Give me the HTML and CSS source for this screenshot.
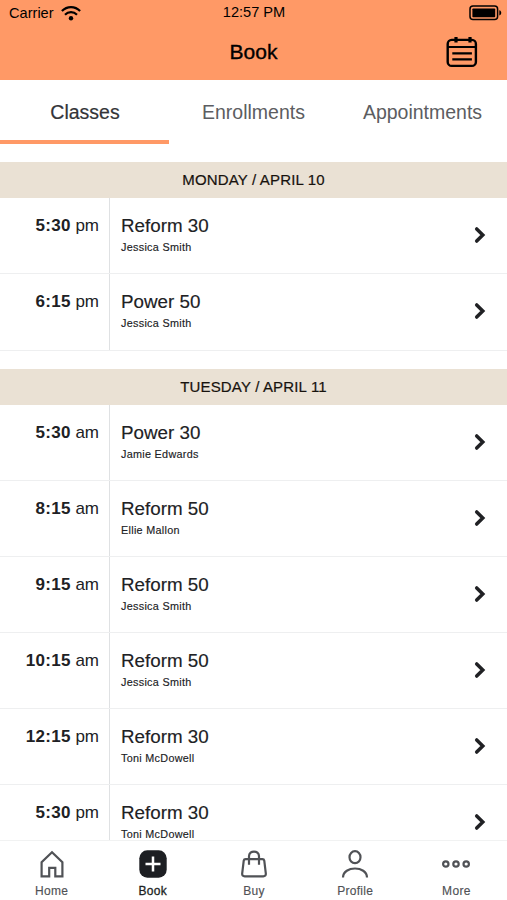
FILE: index.html
```html
<!DOCTYPE html>
<html lang="en">
<head>
<meta charset="utf-8">
<title>Book</title>
<link rel="stylesheet" href="styles.css">
</head>
<body>
<svg class="defs" aria-hidden="true">
  <symbol id="chevron" viewBox="0 0 12 18"><path d="M2.7 2.9 8.8 9 2.7 15.1" fill="none" stroke="currentColor" stroke-width="3.5" stroke-linecap="round"/></symbol>
</svg>
<div class="app">
  <header class="header">
    <div class="status">
      <div class="carrier"><span>Carrier</span>
        <svg class="wifi" width="20" height="15" viewBox="0 0 20 15"><g fill="none" stroke="#000" stroke-width="2.2"><path d="M.9 5.1C6-.2 14-.2 19.1 5.1"/><path d="M4 8.7C7.4 5.3 12.6 5.3 16 8.7"/></g><circle cx="10" cy="12.2" r="2.2"/></svg>
      </div>
      <div class="clock">12:57 PM</div>
      <svg class="battery" width="33" height="16" viewBox="0 0 33 16"><rect x="1" y="1" width="27.6" height="13.6" rx="3" fill="none" stroke="#000" stroke-width="1.5"/><rect x="3.4" y="3.4" width="22.8" height="8.8" rx=".8"/><path d="M30.3 5.2c2.6.6 2.6 4.6 0 5.2z"/></svg>
    </div>
    <div class="titlebar">
      <h1 class="title">Book</h1>
      <svg class="calendar" width="32" height="32" viewBox="0 0 32 32" fill="none" stroke="#000" stroke-width="2.4"><rect x="1.7" y="3.9" width="28.2" height="26" rx="4"/><path d="M2 11h28" stroke-width="2"/><path d="M10 1v5.4M24 1v5.4" stroke-width="3.2"/><path d="M6.3 17.3h19.6M6.3 23.4h19.6" stroke-width="2.2"/></svg>
    </div>
  </header>
  <nav class="tabs">
    <div class="tab active">Classes</div>
    <div class="tab">Enrollments</div>
    <div class="tab">Appointments</div>
  </nav>
  <main class="schedule">
    <section class="day">
      <h2 class="date">MONDAY / APRIL 10</h2>
      <div class="row"><div class="time"><b>5:30</b> pm</div><div class="info"><div class="name">Reform 30</div><div class="coach">Jessica Smith</div></div><svg class="chevron"><use href="#chevron"/></svg></div>
      <div class="row"><div class="time"><b>6:15</b> pm</div><div class="info"><div class="name">Power 50</div><div class="coach">Jessica Smith</div></div><svg class="chevron"><use href="#chevron"/></svg></div>
    </section>
    <section class="day">
      <h2 class="date">TUESDAY / APRIL 11</h2>
      <div class="row"><div class="time"><b>5:30</b> am</div><div class="info"><div class="name">Power 30</div><div class="coach">Jamie Edwards</div></div><svg class="chevron"><use href="#chevron"/></svg></div>
      <div class="row"><div class="time"><b>8:15</b> am</div><div class="info"><div class="name">Reform 50</div><div class="coach">Ellie Mallon</div></div><svg class="chevron"><use href="#chevron"/></svg></div>
      <div class="row"><div class="time"><b>9:15</b> am</div><div class="info"><div class="name">Reform 50</div><div class="coach">Jessica Smith</div></div><svg class="chevron"><use href="#chevron"/></svg></div>
      <div class="row"><div class="time"><b>10:15</b> am</div><div class="info"><div class="name">Reform 50</div><div class="coach">Jessica Smith</div></div><svg class="chevron"><use href="#chevron"/></svg></div>
      <div class="row"><div class="time"><b>12:15</b> pm</div><div class="info"><div class="name">Reform 30</div><div class="coach">Toni McDowell</div></div><svg class="chevron"><use href="#chevron"/></svg></div>
      <div class="row"><div class="time"><b>5:30</b> pm</div><div class="info"><div class="name">Reform 30</div><div class="coach">Toni McDowell</div></div><svg class="chevron"><use href="#chevron"/></svg></div>
    </section>
  </main>
  <footer class="nav">
    <div class="item"><svg class="icon" viewBox="0 0 30 30"><path d="M4.6 27.3V13.2L15 3.2 25.4 13.2V27.3H18.3V18.8H12.2V27.3Z"/></svg>Home</div>
    <div class="item current"><svg class="icon" viewBox="0 0 30 30"><rect x="1.3" y="1.3" width="27.4" height="27.4" rx="8" fill="#1d1f23" stroke="none"/><path d="M15 7.5v15M7.5 15h15" stroke="#fff" stroke-width="2.5"/></svg>Book</div>
    <div class="item"><svg class="icon" viewBox="0 0 30 30"><path d="M6.6 10.2H23.4Q25 10.2 25.3 11.8L26.8 24.4Q27.1 27.3 24.3 27.3H5.7Q2.9 27.3 3.2 24.4L4.7 11.8Q5 10.2 6.6 10.2ZM10 15.8V7.2C10 1 20 1 20 7.2V15.8"/></svg>Buy</div>
    <div class="item"><svg class="icon" viewBox="0 0 30 30"><ellipse cx="15" cy="8.2" rx="5.5" ry="6"/><path d="M3 28.5C3.2 16.5 26.8 16.5 27 28.5"/></svg>Profile</div>
    <div class="item"><svg class="icon" viewBox="0 0 30 30"><circle cx="4.8" cy="15" r="2.7"/><circle cx="15" cy="15" r="2.7"/><circle cx="25.2" cy="15" r="2.7"/></svg>More</div>
  </footer>
</div>
</body>
</html>
```
FILE: styles.css
```css
* { box-sizing: border-box; }
body { margin: 0; background: #fff; color: #202124; font-family: "Liberation Sans", Arial, sans-serif; }
.defs { display: none; }
.app { display: flex; flex-direction: column; width: 507px; height: 900px; overflow: hidden; }
.header { flex: none; height: 80px; background: #ff9966; color: #000; }
.status { display: grid; grid-template-columns: 1fr auto 1fr; height: 24px; padding: 0 5px 0 9px; font-size: 14.6px; line-height: 24px; }
.carrier { display: flex; align-items: center; gap: 7px; }
.carrier span { padding-top: 1px; }
.wifi { margin-top: 1px; }
.clock { padding-right: 3px; }
.battery { justify-self: end; margin-top: 5px; }
.titlebar { display: grid; grid-template-columns: 1fr auto 1fr; align-items: center; height: 56px; padding: 0 29px; }
.title { grid-column: 2; margin: 0; font-size: 21px; font-weight: 400; line-height: 56px; -webkit-text-stroke: .35px #000; }
.calendar { justify-self: end; }
.tabs { flex: none; display: grid; grid-template-columns: repeat(3, 1fr); height: 64px; color: #5c5d61; font-size: 19.5px; line-height: 64px; text-align: center; }
.tab { height: 64px; }
.active { padding-left: 1px; border-bottom: 4px solid #ff9966; color: #333438; -webkit-text-stroke: .2px #333438; }
.schedule { flex: 1; min-height: 0; overflow: hidden; padding-top: 18.4px; }
.day { margin-bottom: 18px; }
.date { height: 35.8px; margin: 0; background: #eae1d4; color: #17120d; font-size: 15px; font-weight: 400; line-height: 36px; text-align: center; letter-spacing: .16px; -webkit-text-stroke: .2px #17120d; }
.row { display: grid; grid-template-columns: 110px 1fr 33px; height: 76.2px; border-bottom: 1px solid #eeeff0; }
.day + .day .row { height: 76.1px; }
.day + .day { margin-top: 18.6px; }
.day + .day .date { line-height: 35px; }
.time { border-right: 1px solid #dfe1e3; padding: 18px 10px 0 0; font-size: 17px; line-height: 20px; text-align: right; }
.time b { letter-spacing: .3px; }
.info { padding: 17px 0 0 11px; }
.name { font-size: 18.8px; line-height: 22px; -webkit-text-stroke: .15px #202124; }
.coach { margin-top: 4px; font-size: 10.8px; line-height: 13px; letter-spacing: .3px; -webkit-text-stroke: .15px #202124; }
.chevron { width: 12px; height: 18px; margin-top: 28px; }
.nav { flex: none; display: grid; grid-template-columns: repeat(5, 1fr); height: 60px; padding-left: 1px; border-top: 1px solid #f1f2f2; background: #fff; color: #505256; }
.item { display: flex; flex-direction: column; align-items: center; gap: 4px; padding-top: 8px; font-size: 12px; line-height: 16px; letter-spacing: .3px; -webkit-text-stroke: .15px #505256; }
.current { color: #1d1f23; -webkit-text-stroke: .3px #1d1f23; }
.icon { width: 30px; height: 30px; fill: none; stroke: #505256; stroke-width: 2.2; }
```
